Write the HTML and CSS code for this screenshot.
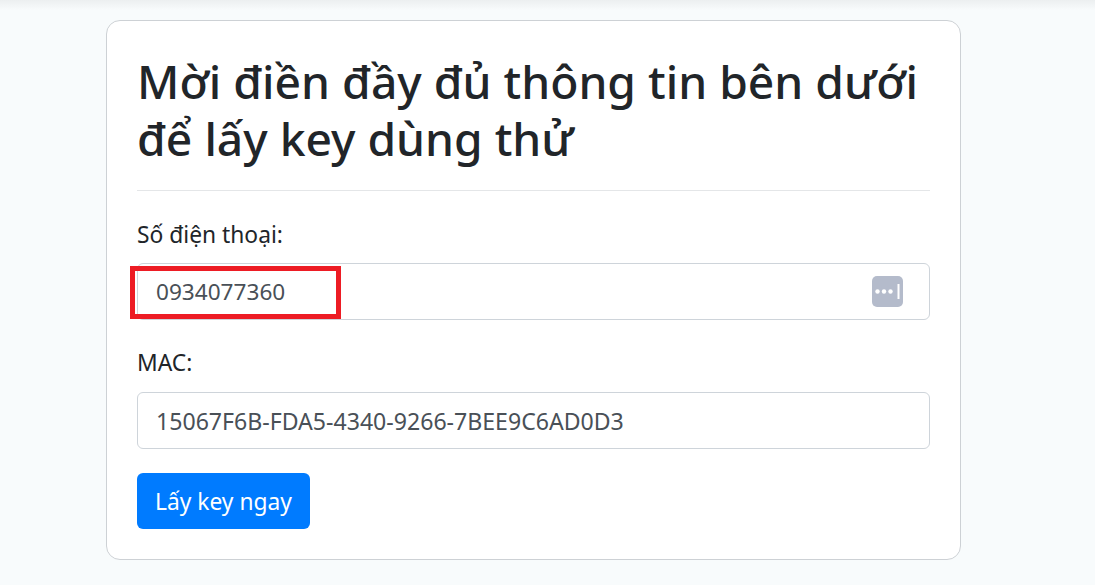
FILE: index.html
```html
<!DOCTYPE html>
<html lang="vi">
  <head>
    <meta charset="UTF-8" />
    <meta name="viewport" content="width=device-width, initial-scale=1.0" />
    <title>Lấy key dùng thử</title>
    <link rel="stylesheet" href="styles.css">
  </head>
  <body>
    <div class="top-shadow"></div>
    <div class="card">
      <h1>Mời điền đầy đủ thông tin bên dưới để lấy key dùng thử</h1>
      <hr />
      <form class="key-form">
        <label for="phone">Số điện thoại:</label>
        <div class="input-wrap">
          <input type="text" id="phone" value="0934077360" />
          <span class="pass-icon">
            <svg width="31" height="31" viewBox="0 0 31 31">
              <rect width="31" height="31" rx="5" fill="#b4bbcb" />
              <circle cx="5.5" cy="15.5" r="2.2" fill="#fff" />
              <circle cx="12" cy="15.5" r="2.2" fill="#fff" />
              <circle cx="18.5" cy="15.5" r="2.2" fill="#fff" />
              <rect x="25.5" y="8" width="2" height="15" fill="#fff" />
            </svg>
          </span>
          <span class="red-box"></span>
        </div>
        <label for="mac" class="mac-label">MAC:</label>
        <div class="input-wrap last">
          <input type="text" id="mac" value="15067F6B-FDA5-4340-9266-7BEE9C6AD0D3" />
        </div>
        <button type="button" class="submit-button">Lấy key ngay</button>
      </form>
    </div>
  </body>
</html>
```

FILE: styles.css
```css
body {
  font-family: "Noto Sans", "Open Sans", sans-serif;
  background: #f8fbfc;
  color: #212529;
  margin: 0;
  height: 585px;
  overflow: hidden;
}
.top-shadow {
  height: 20px;
  background: linear-gradient(#eceff0, #f8fbfc 10px);
}
.card {
  box-sizing: border-box;
  width: 855px;
  height: 540px;
  margin-left: 106px;
  padding: 32px 30px 30px;
  background: #ffffff;
  border: 1px solid #cdd1d5;
  border-radius: 14px;
}
h1 {
  margin: 0;
  font-size: 46.2px;
  font-weight: 500;
  line-height: 57px;
}
hr {
  margin: 23px 0 29px;
  border: 0;
  border-top: 1px solid #e4e6e8;
}
label {
  display: block;
  font-size: 22.8px;
  line-height: 30px;
  margin-bottom: 13px;
}
.mac-label {
  margin-bottom: 14px;
}
.input-wrap {
  position: relative;
  margin-bottom: 28px;
}
.input-wrap.last {
  margin-bottom: 24px;
}
input {
  display: block;
  box-sizing: border-box;
  width: 100%;
  height: 57px;
  padding: 0 18px;
  border: 1px solid #ced4da;
  border-radius: 6px;
  background: #ffffff;
  color: #495057;
  font-family: inherit;
  font-size: 23.1px;
  outline: none;
}
#phone {
  font-size: 22.6px;
}
.pass-icon {
  position: absolute;
  top: 13px;
  right: 27px;
  height: 31px;
}
.red-box {
  position: absolute;
  top: 3px;
  left: -7px;
  width: 211px;
  height: 53px;
  border: 5px solid #ed1c24;
  box-sizing: border-box;
}
.submit-button {
  display: block;
  height: 56px;
  padding: 0 18px;
  border: 0;
  border-radius: 6px;
  background: #007bff;
  color: #ffffff;
  font-family: inherit;
  font-size: 22.8px;
}
```
